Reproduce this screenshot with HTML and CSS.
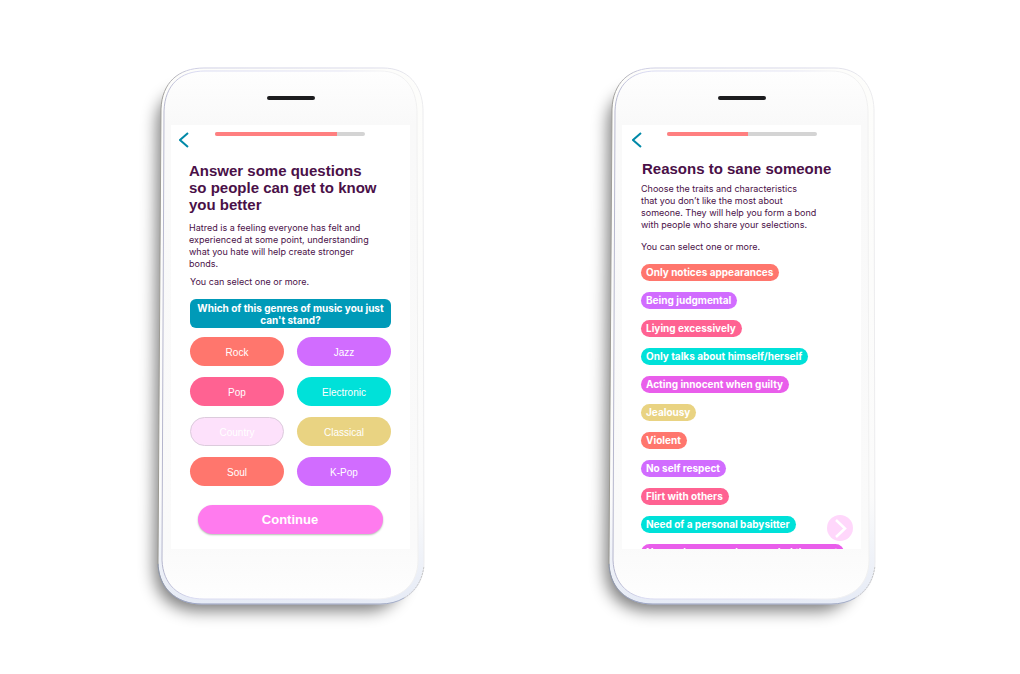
FILE: index.html
```html
<!DOCTYPE html>
<html lang="en">
<head>
<meta charset="utf-8">
<meta name="viewport" content="width=device-width, initial-scale=1">
<title>Getting to know you</title>
<link rel="stylesheet" href="styles.css">
</head>
<body>
<svg class="defs" aria-hidden="true">
  <defs>
    <linearGradient id="edge" x1="0" y1="0" x2="1" y2="0">
      <stop offset="0" stop-color="#9a9890"/>
      <stop offset=".12" stop-color="#cfcfe4"/>
      <stop offset=".8" stop-color="#dcdcea"/>
      <stop offset="1" stop-color="#ececee"/>
    </linearGradient>
    <linearGradient id="inner" x1="0" y1="0" x2="1" y2="0">
      <stop offset="0" stop-color="#b4b5cc"/>
      <stop offset=".12" stop-color="#dadbf2"/>
      <stop offset=".7" stop-color="#e4e4f4"/>
      <stop offset=".85" stop-color="#f2f2f4"/>
      <stop offset="1" stop-color="#f0f0f0"/>
    </linearGradient>
    <linearGradient id="rim" x1="0" y1="0" x2="0" y2="1">
      <stop offset="0" stop-color="#fdfdfb"/>
      <stop offset=".8" stop-color="#fbfbfb"/>
      <stop offset="1" stop-color="#e6ebf6"/>
    </linearGradient>
    <linearGradient id="face" x1="0" y1="0" x2="0" y2="1">
      <stop offset="0" stop-color="#fefefe"/>
      <stop offset=".1" stop-color="#f9f9f9"/>
      <stop offset=".9" stop-color="#fafafa"/>
      <stop offset="1" stop-color="#fefefe"/>
    </linearGradient>
    <filter id="soft" x="-20%" y="-10%" width="140%" height="120%">
      <feGaussianBlur stdDeviation="8"/>
    </filter>
    <symbol id="phone" viewBox="0 0 266 540" overflow="visible">
      <path d="M-1 56 Q0 26 32 24 H200 Q234 30 238 70 L248 496 Q246 540 214 545 H38 Q-4 542 -4 500Z" fill="#000" opacity=".5" filter="url(#soft)"/>
      <path d="M3 42 C4 16 20 1 46 1 H225 C250 1 264 18 265 42 L266 496 C266 520 250 538 222 538 H44 C16 538 0 520 0 496Z" fill="url(#rim)" stroke="url(#edge)"/>
      <path d="M6 44 C7 18 22 4 47 4 H222 C246 4 258 20 259 44 L260 494 C260 518 244 533 218 533 H46 C20 533 5 518 4 494Z" fill="url(#face)" stroke="url(#inner)"/>
      <path d="M0 498 C1 522 17 538 44 538 H222 Q236 538 246 532" fill="none" stroke="#8795b8" stroke-opacity=".7"/>
      <path d="M246 532 Q263 522 266 500" fill="none" stroke="#999" stroke-dasharray="2 1" stroke-opacity=".5"/>
    </symbol>
  </defs>
</svg>
<main class="stage">
  <section class="phone" aria-label="Music genres">
    <svg class="frame" viewBox="0 0 266 540" preserveAspectRatio="none" aria-hidden="true"><use href="#phone"/></svg>
    <div class="speaker"></div>
    <div class="screen">
      <header class="topbar">
        <button class="back" type="button" aria-label="Back"><svg viewBox="0 0 10 16"><path d="M9 1 L1 8 L9 15"/></svg></button>
        <div class="track"><div class="fill" style="width:81%"></div></div>
      </header>
      <div class="content">
        <h1>Answer some questions<br>so people can get to know<br>you better</h1>
        <p>Hatred is a feeling everyone has felt and<br>experienced at some point, understanding<br>what you hate will help create stronger<br>bonds.</p>
        <p class="hint inset">You can select one or more.</p>
        <h2 class="question">Which of this genres of music you just<br>can't stand?</h2>
        <div class="genres">
          <button type="button" class="genre coral">Rock</button>
          <button type="button" class="genre violet">Jazz</button>
          <button type="button" class="genre pink">Pop</button>
          <button type="button" class="genre teal">Electronic</button>
          <button type="button" class="genre pale">Country</button>
          <button type="button" class="genre sand">Classical</button>
          <button type="button" class="genre coral">Soul</button>
          <button type="button" class="genre violet">K-Pop</button>
        </div>
        <button type="button" class="continue">Continue</button>
      </div>
    </div>
  </section>
  <section class="phone" aria-label="Reasons">
    <svg class="frame" viewBox="0 0 266 540" preserveAspectRatio="none" aria-hidden="true"><use href="#phone"/></svg>
    <div class="speaker"></div>
    <div class="screen">
      <header class="topbar wide">
        <button class="back" type="button" aria-label="Back"><svg viewBox="0 0 10 16"><path d="M9 1 L1 8 L9 15"/></svg></button>
        <div class="track"><div class="fill" style="width:54%"></div></div>
      </header>
      <div class="content reasons">
        <h1>Reasons to sane someone</h1>
        <p>Choose the traits and characteristics<br>that you don’t like the most about<br>someone. They will help you form a bond<br>with people who share your selections.</p>
        <p class="hint">You can select one or more.</p>
        <div class="tags">
          <button type="button" class="tag coral">Only notices appearances</button>
          <button type="button" class="tag violet">Being judgmental</button>
          <button type="button" class="tag pink">Liying excessively</button>
          <button type="button" class="tag teal">Only talks about himself/herself</button>
          <button type="button" class="tag orchid">Acting innocent when guilty</button>
          <button type="button" class="tag sand">Jealousy</button>
          <button type="button" class="tag coral">Violent</button>
          <button type="button" class="tag violet">No self respect</button>
          <button type="button" class="tag pink">Flirt with others</button>
          <button type="button" class="tag teal">Need of a personal babysitter</button>
          <button type="button" class="tag orchid">Never shows up when needed the most</button>
        </div>
      </div>
      <button type="button" class="next" aria-label="Next"><svg viewBox="0 0 26 26"><path d="M9 5 L18 13.5 L9 22"/></svg></button>
    </div>
  </section>
</main>
</body>
</html>
```

FILE: styles.css
```css
* { box-sizing: border-box; }
body {
  margin: 0;
  background: #fff;
  color: #4a1048;
  font-family: Inter, "Liberation Sans", Arial, sans-serif;
}
.defs { position: absolute; width: 0; height: 0; }
.stage {
  display: flex;
  flex-wrap: wrap;
  justify-content: center;
  gap: 64px 185px;
  padding: 67px 0 64px 13px;
}
.phone {
  position: relative;
  width: 266px;
  padding: 29px 14px 57px 13px;
}
.frame {
  position: absolute;
  inset: 0;
  width: 100%;
  height: 100%;
  overflow: visible;
}
.speaker {
  position: relative;
  width: 48px;
  height: 4px;
  margin: 0 auto 25px;
  border-radius: 2px;
  background: #1c1c1e;
}
.screen {
  position: relative;
  height: 424px;
  overflow: hidden;
  background: #fff;
}
.topbar {
  display: flex;
  align-items: flex-start;
  gap: 26px;
  padding: 7px 45px 0 8px;
}
.wide { gap: 25px; padding-left: 10px; padding-right: 44px; }
button { border: 0; padding: 0; font-family: inherit; color: #fff; cursor: pointer; }
.back { width: 10px; height: 16px; background: none; }
.back svg { display: block; width: 10px; height: 16px; fill: none; stroke: #0089a8; stroke-width: 2; }
.track { flex: 1; height: 4px; border-radius: 2px; background: #d4d4d4; overflow: hidden; }
.fill { height: 100%; background: #ff7f80; }
.content { padding: 14px 19px 0 18px; }
h1 {
  margin: 0;
  font-family: "Liberation Sans", Arial, sans-serif;
  font-size: 15px;
  line-height: 17px;
  font-weight: 700;
  white-space: nowrap;
}
p { margin: 9px 0 0; font-size: 9px; line-height: 12px; white-space: nowrap; }
.hint { margin-top: 6px; }
.inset { padding-left: 1px; }
.question {
  margin: 11px 0 0 1px;
  padding: 3px 0 2px;
  border-radius: 6px;
  background: #009ab8;
  color: #fff;
  font-size: 10px;
  line-height: 12px;
  font-weight: 700;
  text-align: center;
  white-space: nowrap;
}
.genres {
  display: grid;
  grid-template-columns: 1fr 1fr;
  gap: 11px 13px;
  margin: 9px 0 0 1px;
}
.genre {
  height: 29px;
  padding-top: 1px;
  border-radius: 15px;
  font-family: "Liberation Sans", Arial, sans-serif;
  font-size: 10px;
}
.coral { background: #ff766d; }
.violet { background: #d16cff; }
.pink { background: #ff6292; }
.teal { background: #00e1d9; }
.sand { background: #e9d382; }
.orchid { background: #e95eeb; }
.pale { background: #fde1fb; border: 1px solid #dccbdc; }
.continue {
  display: block;
  width: 185px;
  height: 29px;
  margin: 19px auto 0;
  border-radius: 15px;
  background: #ff7bee;
  box-shadow: 0 1px 2px #b4c0b4;
  font-family: "Liberation Sans", Arial, sans-serif;
  font-size: 13px;
  font-weight: 700;
}
.reasons { padding: 12px 16px 0 19px; }
.reasons h1 { padding-left: 1px; }
.reasons p { margin-top: 6px; }
.reasons .hint { margin-top: 10px; }
.tags {
  display: flex;
  flex-direction: column;
  align-items: flex-start;
  gap: 11px;
  margin-top: 11px;
}
.tag {
  flex: none;
  height: 17px;
  padding: 0 6px 0 5px;
  border-radius: 9px;
  font-size: 10px;
  line-height: 17px;
  font-weight: 700;
  white-space: nowrap;
}
.next {
  position: absolute;
  right: 8px;
  bottom: 8px;
  width: 26px;
  height: 26px;
  border-radius: 50%;
  background: #ffd7fb;
}
.next svg { display: block; fill: none; stroke: #fff; stroke-width: 2.5; }
```
